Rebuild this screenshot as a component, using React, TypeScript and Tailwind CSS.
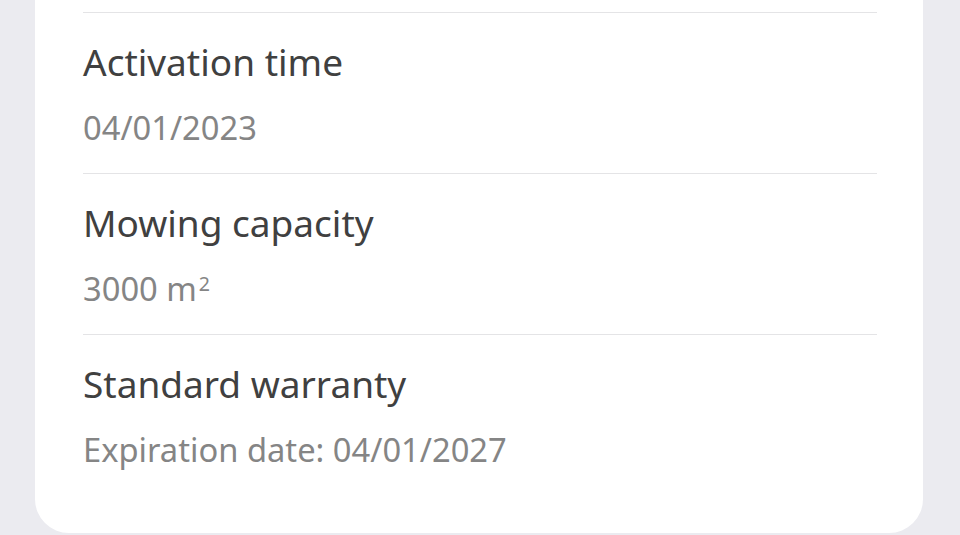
const rows = [
  { title: 'Activation time', value: '04/01/2023' },
  { title: 'Mowing capacity', value: <>3000 m<sup className="text-[0.6em] relative -top-[0.5em] ml-[2px] align-baseline">2</sup></> },
  { title: 'Standard warranty', value: 'Expiration date: 04/01/2027' },
]

export default function App() {
  return (
    <div className="h-[535px] overflow-hidden bg-[#ebebf0] pl-[35px] pr-[37px] font-['Noto_Sans',sans-serif]">
      <div className="bg-white rounded-b-[34px] pl-[48px] pr-[46px] pt-[12px] pb-[38px]">
        {rows.map((r, i) => (
          <div key={i} className="border-t border-[#e4e4e6] pt-[30px] pb-[29px]">
            <div className="h-[37px] text-[37px] leading-none text-[#404040]">{r.title}</div>
            <div className="mt-[31px] h-[33px] text-[32.7px] leading-[33px] text-[#858585]">{r.value}</div>
          </div>
        ))}
      </div>
    </div>
  )
}
